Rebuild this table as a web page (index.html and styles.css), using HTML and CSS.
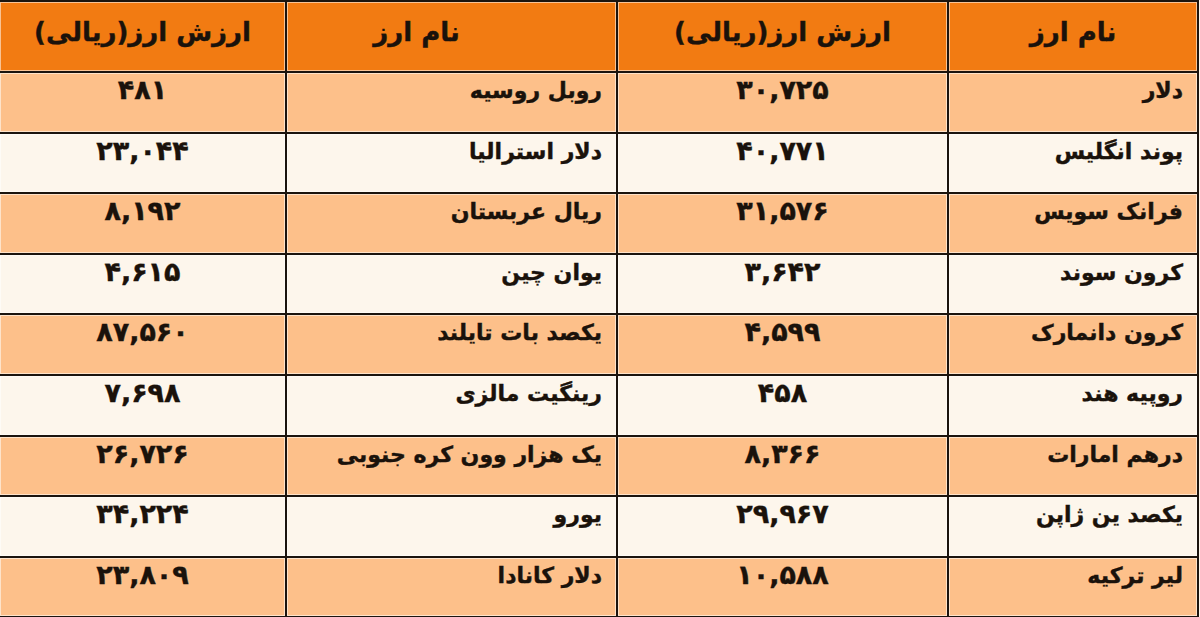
FILE: index.html
```html
<!DOCTYPE html>
<html lang="fa" dir="rtl">
<head>
<meta charset="utf-8">
<link rel="stylesheet" href="styles.css">
</head>
<body>
<table class="rates">
  <colgroup>
    <col class="c1"><col class="c2"><col class="c3"><col class="c4">
  </colgroup>
  <thead>
    <tr class="head">
      <th>نام ارز</th><th>ارزش ارز(ریالی)</th><th class="name-h">نام ارز</th><th>ارزش ارز(ریالی)</th>
    </tr>
  </thead>
  <tbody>
    <tr class="odd"><td class="name">دلار</td><td class="num">۳۰,۷۲۵</td><td class="name">روبل روسیه</td><td class="num">۴۸۱</td></tr>
    <tr class="even"><td class="name">پوند انگلیس</td><td class="num">۴۰,۷۷۱</td><td class="name">دلار استرالیا</td><td class="num">۲۳,۰۴۴</td></tr>
    <tr class="odd"><td class="name">فرانک سویس</td><td class="num">۳۱,۵۷۶</td><td class="name">ریال عربستان</td><td class="num">۸,۱۹۲</td></tr>
    <tr class="even"><td class="name">کرون سوند</td><td class="num">۳,۶۴۲</td><td class="name">یوان چین</td><td class="num">۴,۶۱۵</td></tr>
    <tr class="odd"><td class="name">کرون دانمارک</td><td class="num">۴,۵۹۹</td><td class="name">یکصد بات تایلند</td><td class="num">۸۷,۵۶۰</td></tr>
    <tr class="even"><td class="name">روپیه هند</td><td class="num">۴۵۸</td><td class="name">رینگیت مالزی</td><td class="num">۷,۶۹۸</td></tr>
    <tr class="odd"><td class="name">درهم امارات</td><td class="num">۸,۳۶۶</td><td class="name">یک هزار وون کره جنوبی</td><td class="num">۲۶,۷۲۶</td></tr>
    <tr class="even"><td class="name">یکصد ین ژاپن</td><td class="num">۲۹,۹۶۷</td><td class="name">یورو</td><td class="num">۳۴,۲۲۴</td></tr>
    <tr class="odd"><td class="name">لیر ترکیه</td><td class="num">۱۰,۵۸۸</td><td class="name">دلار کانادا</td><td class="num">۲۳,۸۰۹</td></tr>
  </tbody>
</table>
</body>
</html>
```
FILE: styles.css
```css
html, body {
  margin: 0;
  padding: 0;
  background: #fdf6ec;
}
body {
  width: 1200px;
  height: 617px;
  overflow: hidden;
  font-family: "DejaVu Sans", sans-serif;
  font-weight: bold;
  color: #1a120b;
  -webkit-text-stroke: 0.4px #1a120b;
}
.rates {
  width: 1199px;
  border-collapse: collapse;
  table-layout: fixed;
  margin-right: 1px;
}
.c1 { width: 250px; }
.c2 { width: 331px; }
.c3 { width: 331px; }
.c4 { width: 287px; }
.rates th, .rates td {
  border: 2px solid #1b140e;
  box-shadow: inset 0 0 0 1px rgba(255, 255, 255, 0.55);
  padding: 0;
}
.head th {
  height: 60px;
  background: #f27b12;
  font-size: 26px;
  font-weight: bold;
  text-align: center;
  vertical-align: middle;
  padding-bottom: 9px;
}
.head th.name-h {
  padding-right: 70px;
}
.rates td {
  height: 55.6px;
  vertical-align: top;
  font-size: 22px;
  line-height: 30px;
  padding-top: 3px;
}
.odd td { background: #fdc08a; }
.even td { background: #fdf6ec; }
td.name {
  text-align: right;
  padding-right: 14px;
}
td.num {
  text-align: center;
  font-size: 27px;
  line-height: 28px;
}
```
